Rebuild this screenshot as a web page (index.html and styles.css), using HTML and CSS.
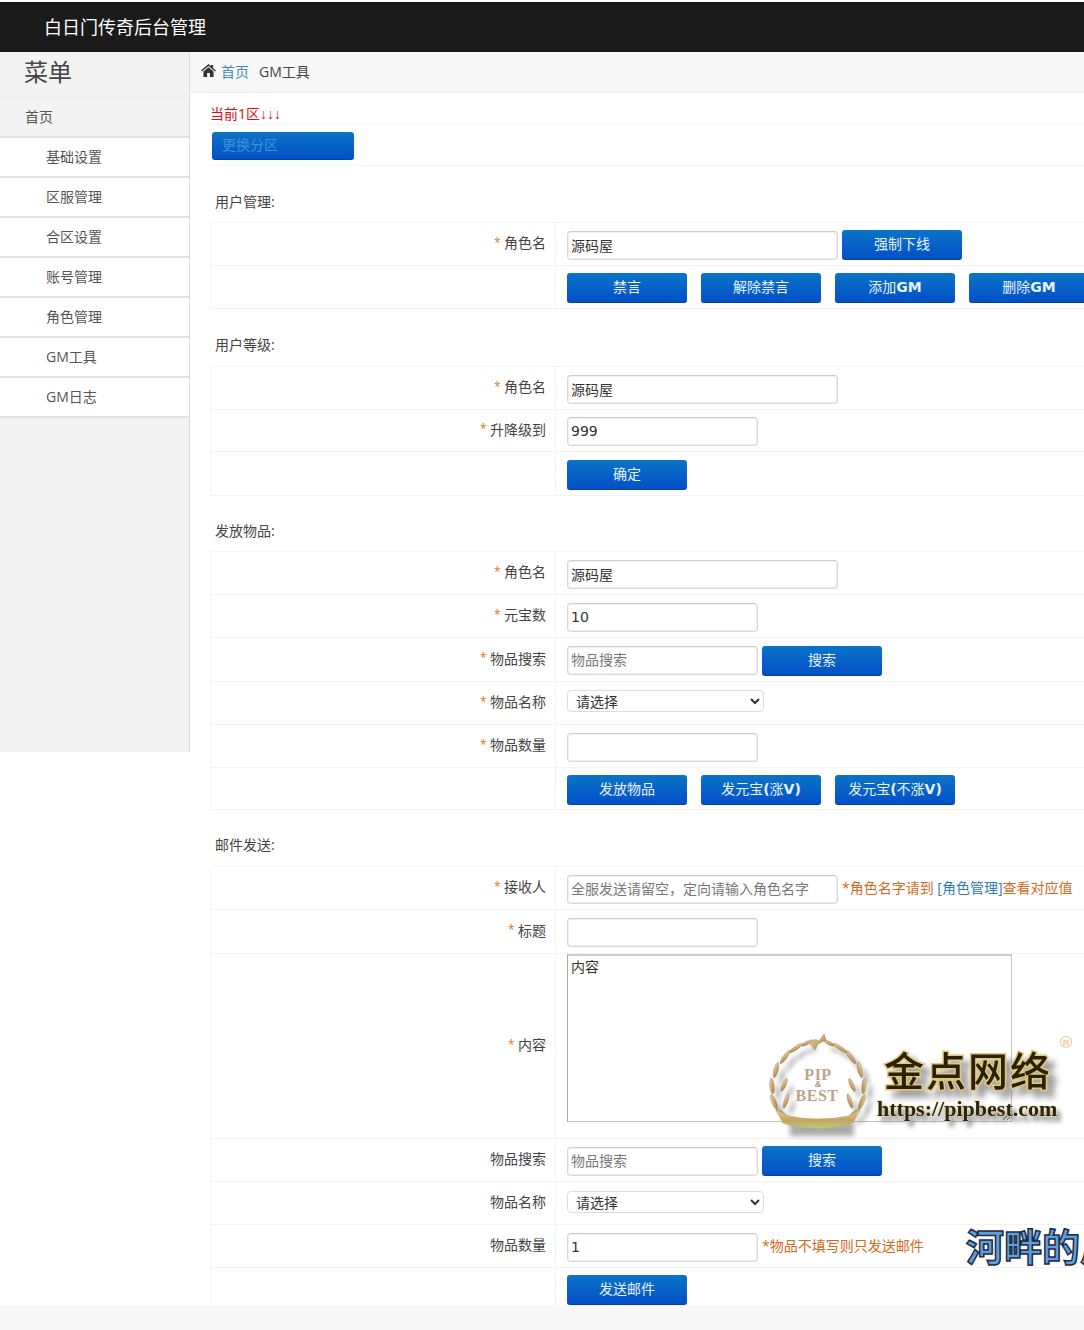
FILE: index.html
```html
<!DOCTYPE html>
<html lang="zh-CN">
<head>
<meta charset="utf-8">
<title>白日门传奇后台管理</title>
<link rel="stylesheet" href="styles.css">
</head>
<body>
<div class="page">
  <header class="topbar"><span class="brand">白日门传奇后台管理</span></header>
  <div class="main">
    <aside class="sidebar">
      <div class="menu-title">菜单</div>
      <div class="menu-item menu-root">首页</div>
      <div class="menu-item">基础设置</div>
      <div class="menu-item">区服管理</div>
      <div class="menu-item">合区设置</div>
      <div class="menu-item">账号管理</div>
      <div class="menu-item">角色管理</div>
      <div class="menu-item">GM工具</div>
      <div class="menu-item">GM日志</div>
    </aside>
    <main class="content">
      <nav class="crumbs">
        <svg class="home" viewBox="0 0 16 14" width="15" height="13"><path d="M8 0 L10.6 2.3 V1 H12.9 V4.4 L16 7.1 L15 8.2 L8 2.1 L1 8.2 L0 7.1 Z M2.6 8.2 L8 3.5 L13.4 8.2 V14 H9.5 V9.8 H6.5 V14 H2.6 Z" fill="#333"/></svg>
        <a class="crumb-link">首页</a><span class="crumb-current">GM工具</span>
      </nav>
      <div class="zone-line">当前1区<span class="arrows">↓↓↓</span></div>
      <div class="zone-action"><button class="btn btn-zone">更换分区</button></div>

      <h3 class="sec-title sec-a">用户管理:</h3>
      <section class="form">
        <div class="row">
          <div class="label"><i>*</i>角色名</div>
          <div class="field"><input class="input input-lg" value="源码屋"><button class="btn">强制下线</button></div>
        </div>
        <div class="row">
          <div class="label"></div>
          <div class="field field-btns"><button class="btn">禁言</button><button class="btn">解除禁言</button><button class="btn">添加<span class="lat">GM</span></button><button class="btn">删除<span class="lat">GM</span></button></div>
        </div>
      </section>

      <h3 class="sec-title">用户等级:</h3>
      <section class="form">
        <div class="row">
          <div class="label"><i>*</i>角色名</div>
          <div class="field"><input class="input input-lg" value="源码屋"></div>
        </div>
        <div class="row row-short">
          <div class="label"><i>*</i>升降级到</div>
          <div class="field"><input class="input input-sm" value="999"></div>
        </div>
        <div class="row row-tall">
          <div class="label"></div>
          <div class="field"><button class="btn">确定</button></div>
        </div>
      </section>

      <h3 class="sec-title sec-b">发放物品:</h3>
      <section class="form">
        <div class="row">
          <div class="label"><i>*</i>角色名</div>
          <div class="field"><input class="input input-lg" value="源码屋"></div>
        </div>
        <div class="row">
          <div class="label"><i>*</i>元宝数</div>
          <div class="field"><input class="input input-sm" value="10"></div>
        </div>
        <div class="row row-tall">
          <div class="label"><i>*</i>物品搜索</div>
          <div class="field"><input class="input input-sm" placeholder="物品搜索"><button class="btn">搜索</button></div>
        </div>
        <div class="row">
          <div class="label"><i>*</i>物品名称</div>
          <div class="field"><select class="select select-a"><option>请选择</option></select></div>
        </div>
        <div class="row">
          <div class="label"><i>*</i>物品数量</div>
          <div class="field"><input class="input input-sm"></div>
        </div>
        <div class="row row-short">
          <div class="label"></div>
          <div class="field field-btns"><button class="btn">发放物品</button><button class="btn">发元宝<span class="lat">(</span>涨<span class="lat">V)</span></button><button class="btn">发元宝<span class="lat">(</span>不涨<span class="lat">V)</span></button></div>
        </div>
      </section>

      <h3 class="sec-title sec-c">邮件发送:</h3>
      <section class="form">
        <div class="row">
          <div class="label"><i>*</i>接收人</div>
          <div class="field"><input class="input input-lg" placeholder="全服发送请留空，定向请输入角色名字"><span class="note">*角色名字请到 <a class="note-link">[角色管理]</a>查看对应值</span></div>
        </div>
        <div class="row row-tall">
          <div class="label"><i>*</i>标题</div>
          <div class="field"><input class="input input-sm"></div>
        </div>
        <div class="row row-text">
          <div class="label"><i>*</i>内容</div>
          <div class="field field-top"><textarea class="textarea">内容</textarea></div>
        </div>
        <div class="row">
          <div class="label">物品搜索</div>
          <div class="field"><input class="input input-sm" placeholder="物品搜索"><button class="btn">搜索</button></div>
        </div>
        <div class="row">
          <div class="label">物品名称</div>
          <div class="field"><select class="select select-b"><option>请选择</option></select></div>
        </div>
        <div class="row">
          <div class="label">物品数量</div>
          <div class="field"><input class="input input-sm" value="1"><span class="note">*物品不填写则只发送邮件</span></div>
        </div>
        <div class="row">
          <div class="label"></div>
          <div class="field"><button class="btn">发送邮件</button></div>
        </div>
      </section>
    </main>
  </div>
  <footer class="footer"></footer>

  <svg class="wm-logo" viewBox="765 1030 319 115" width="319" height="115">
    <defs>
      <linearGradient id="gold" x1="0" y1="0" x2="1" y2="1">
        <stop offset="0" stop-color="#f0dcae"/><stop offset="1" stop-color="#a5763c"/>
      </linearGradient>
      <linearGradient id="ribbon" x1="0" y1="0" x2="0" y2="1">
        <stop offset="0" stop-color="#e9c98c"/><stop offset="0.55" stop-color="#c8a262"/><stop offset="1" stop-color="#b5cf78"/>
      </linearGradient>
      <filter id="soft" x="-20%" y="-20%" width="150%" height="160%">
        <feGaussianBlur stdDeviation="2.5"/>
      </filter>
      <g id="half">
        <ellipse cx="781" cy="1113" rx="2" ry="6" transform="rotate(-52 781 1113)"/>
        <ellipse cx="774" cy="1102" rx="2.2" ry="8" transform="rotate(-22 774 1102)"/>
        <ellipse cx="772" cy="1086" rx="2.2" ry="8" transform="rotate(-6 772 1086)"/>
        <ellipse cx="776" cy="1070" rx="2.2" ry="8" transform="rotate(14 776 1070)"/>
        <ellipse cx="785" cy="1057" rx="2" ry="8" transform="rotate(36 785 1057)"/>
        <ellipse cx="796" cy="1048" rx="1.8" ry="8" transform="rotate(56 796 1048)"/>
        <ellipse cx="807" cy="1043" rx="1.6" ry="6" transform="rotate(62 807 1043)"/>
        <ellipse cx="786" cy="1101" rx="2" ry="7.5" transform="rotate(18 786 1101)"/>
        <ellipse cx="784" cy="1085" rx="2" ry="7" transform="rotate(24 784 1085)"/>
      </g>
    </defs>
    <g class="wm-shadow" filter="url(#soft)">
      <use href="#half" transform="translate(6 7)"/>
      <use href="#half" transform="translate(1642 7) scale(-1 1)"/>
      <path d="M790 1122 H854 V1136 H790 Z"/>
    </g>
    <g fill="url(#gold)" stroke="#8a6a32" stroke-width="0.3">
      <use href="#half"/>
      <use href="#half" transform="translate(1636 0) scale(-1 1)"/>
      <path d="M810 1044 Q813 1037 819 1041 L824 1034 L826 1040 L818 1044 L815 1050 Z"/>
    </g>
    <path d="M776 1110 L789 1116 Q818 1122 848 1116 L860 1110 L853 1123 L847 1125 Q818 1132 789 1125 L783 1123 Z" fill="url(#ribbon)" stroke="#a0a868" stroke-width="0.4"/>
    <text class="wm-pip" x="818" y="1080">PIP</text>
    <text class="wm-amp" x="818" y="1087">&amp;</text>
    <text class="wm-pip" x="817" y="1101">BEST</text>
    <text class="wm-cn" x="884" y="1086">金点网络</text>
    <text class="wm-url" x="877" y="1116">https://pipbest.com</text>
    <circle cx="1066" cy="1042" r="5.5" fill="none" stroke="#eec9a8" stroke-width="1.2"/>
    <text class="wm-reg" x="1066" y="1045.5">R</text>
  </svg>
  <div class="wm-river">河畔的风</div>
</div>
</body>
</html>
```

FILE: styles.css
```css
* { box-sizing: border-box; }
html, body { margin: 0; padding: 0; overflow: hidden; background: #fff; }
body {
  font-family: "Open Sans", "Noto Sans CJK SC", sans-serif;
  font-size: 14px;
  color: #333;
}
.page { position: relative; width: 1084px; height: 1330px; padding-top: 2px; overflow: hidden; }

.topbar { height: 50px; background: #1a1a1a; display: flex; align-items: center; padding: 0 0 2px 44px; }
.brand { color: #fff; font-size: 18px; }

.main { display: flex; height: 1253px; overflow: hidden; }
.sidebar { width: 190px; height: 700px; flex: none; background: #f3f3f3; border-right: 1px solid #dcdcdc; }
.menu-title { height: 46px; padding-left: 24px; font-size: 24px; line-height: 40px; color: #444; border-bottom: 1px solid #eaeaea; }
.menu-item { height: 40px; line-height: 38px; padding-left: 46px; background: #fff; border-bottom: 2px solid #e2e2e2; color: #555; }
.menu-root { padding-left: 25px; background: #f3f3f3; }

.content { flex: 1; min-width: 0; }
.crumbs { height: 41px; background: #f7f7f7; border-bottom: 1px solid #eee; display: flex; align-items: center; padding: 0 0 3px 11px; white-space: nowrap; }
.home { margin-right: 5px; }
.crumb-link { color: #4a8ab8; margin-right: 10px; }
.crumb-current { color: #444; }

.zone-line { margin-left: 20px; height: 32px; padding-top: 11px; line-height: 20px; color: #d81010; border-bottom: 1px solid #f4f4f4; }
.arrows { font-family: "Liberation Sans", sans-serif; }
.zone-action { margin-left: 20px; height: 41px; padding: 7px 0 0 2px; border-bottom: 1px solid #f4f4f4; }

.btn {
  flex: none;
  width: 120px;
  height: 30px;
  padding: 0 0 3px;
  border: 0;
  border-bottom: 1px solid #0340a0;
  border-radius: 3px;
  background: linear-gradient(#0b74c6, #0350c8);
  color: #e8f2ff;
  font: 14px "Open Sans", "Noto Sans CJK SC", sans-serif;
  white-space: nowrap;
}
.lat { font-family: "DejaVu Sans", sans-serif; font-weight: 700; }
.btn-zone { width: 142px; height: 28px; text-align: left; padding-left: 10px; color: #3f92d6; }

.sec-title { margin: 0; height: 57px; padding: 26px 0 0 25px; line-height: 20px; font-size: 14px; font-weight: 400; color: #444; }
.sec-a { height: 56px; }
.sec-b { height: 55px; padding-top: 25px; }
.sec-c { height: 56px; padding-top: 25px; }

.form { margin-left: 20px; width: 1000px; border-left: 1px solid #f6f6f6; border-top: 1px solid #f6f6f6; }
.row { display: grid; grid-template-columns: 345px 1fr; height: 43px; border-bottom: 1px solid #f3f3f3; }
.row-tall { height: 44px; }
.row-short { height: 42px; }
.row-text { height: 185px; }
.label { display: flex; align-items: center; justify-content: flex-end; padding: 0 9px 4px 0; border-right: 1px solid #f4f4f4; color: #444; white-space: nowrap; }
.label i { width: 10px; font-size: 12px; font-style: normal; color: #e2731a; }
.field { display: flex; align-items: center; gap: 4px; padding: 2px 0 0 11px; white-space: nowrap; }
.field-btns { gap: 14px; }
.field-top { align-items: flex-start; padding-top: 0; }

.input {
  height: 29px;
  padding: 0 3px 1px;
  border: 1px solid #d8d8d8;
  border-top-color: #ccc;
  border-radius: 4px;
  box-shadow: inset 0 0 0 1px #f0f0f0;
  background: #fff;
  font: 14px "DejaVu Sans", "Noto Sans CJK SC", sans-serif;
  color: #333;
  flex: none;
}
.input::placeholder { color: #777; opacity: 1; }
.input-lg { width: 271px; }
.input-sm { width: 191px; }
.select {
  width: 197px;
  height: 22px;
  padding: 0 4px;
  border: 1px solid #ddd;
  border-radius: 4px;
  background: #fff;
  font: 14px "Open Sans", "Noto Sans CJK SC", sans-serif;
  color: #333;
}
.select-a { margin-bottom: 7px; }
.select-b { margin-bottom: 4px; }
.textarea {
  width: 445px;
  height: 168px;
  padding: 0 3px;
  border: 1px solid #c4c4c4;
  border-top: 2px solid #ccc;
  border-left-color: #aaa;
  resize: both;
  background: #fff;
  font: 14px "Open Sans", "Noto Sans CJK SC", sans-serif;
  color: #333;
}
.note { color: #d2691e; padding-bottom: 4px; }
.note-link { color: #337ab7; }

.footer { height: 25px; background: #f7f7f7; }

.wm-logo { position: absolute; left: 765px; top: 1030px; }
.wm-shadow { fill: #666; opacity: 0.55; }
.wm-cn {
  font: 500 40px "Noto Sans CJK SC", sans-serif;
  letter-spacing: 2px;
  fill: #2a2208;
  stroke: #e4c67c;
  stroke-width: 3px;
  paint-order: stroke;
  filter: drop-shadow(7px 7px 3px rgba(90, 90, 90, 0.6));
}
.wm-url {
  font: 700 22px "Liberation Serif", serif;
  fill: #2a2410;
  stroke: #e8d8a0;
  stroke-width: 1px;
  paint-order: stroke;
  filter: drop-shadow(4px 5px 2px rgba(90, 90, 90, 0.6));
}
.wm-pip { font: 700 16px "Liberation Serif", serif; fill: #bca58c; text-anchor: middle; letter-spacing: 0.5px; }
.wm-amp { font: italic 700 8px "Liberation Serif", serif; fill: #a08868; text-anchor: middle; }
.wm-reg { font: 700 9px "Liberation Sans", sans-serif; fill: #eec9a8; text-anchor: middle; }

.wm-river {
  position: absolute;
  left: 966px;
  top: 1223px;
  font: 700 38px/44px "Noto Sans CJK SC", sans-serif;
  white-space: nowrap;
  color: #5f9fdc;
  -webkit-text-stroke: 1.5px #1d2c44;
}
```
